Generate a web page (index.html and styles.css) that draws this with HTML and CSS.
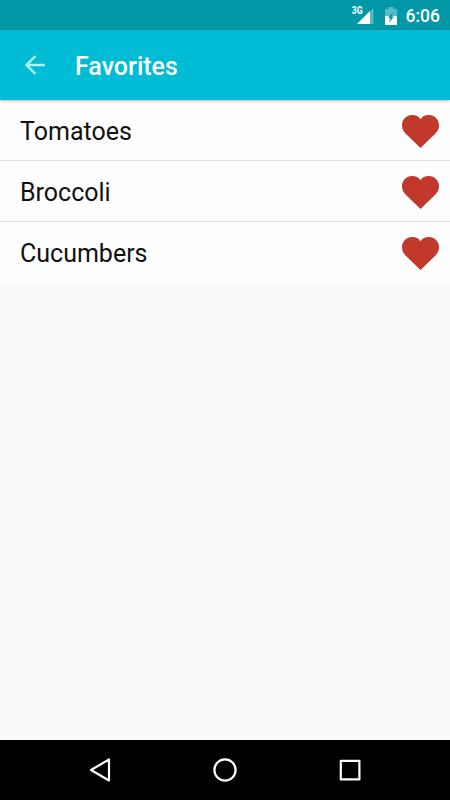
FILE: index.html
```html
<!DOCTYPE html>
<html lang="en">
<head>
<meta charset="utf-8">
<title>Favorites</title>
<link rel="stylesheet" href="styles.css">
</head>
<body>
<div class="screen">
  <div class="status">
    <span class="network">3G</span>
    <svg class="signal" width="18" height="16" viewBox="0 0 18 16"><path d="M1 16 17.5 0V16Z" fill="#fff" opacity=".32"/><path d="M1 16 14 3V16Z" fill="#fff"/></svg>
    <svg class="battery" width="12" height="18" viewBox="0 0 12 18"><path d="M0 2H3.5V0H8.5V2H12V9H0Z" fill="#fff" opacity=".35"/><path d="M0 9H12V18H0Z" fill="#fff"/><path d="M8 5 3 11H5.2L4 15.5 9 9.5H6.8Z" fill="#0097a7"/></svg>
    <time class="clock">6:06</time>
  </div>
  <header class="toolbar">
    <svg class="back" width="20" height="20" viewBox="0 0 20 20"><path d="M20 10H2M10.5 1 1.5 10 10.5 19" fill="none" stroke="#b2f2f5" stroke-width="2.3"/></svg>
    <h1 class="title">Favorites</h1>
  </header>
  <main class="content">
    <ul class="list">
      <li class="row"><span>Tomatoes</span><svg class="heart" viewBox="0 0 37 33"><path d="M18.5 33 4 19C1 16 0 13.5 0 10 0 4.5 4.5 0 10 0 14 0 17 1.5 18.5 4.2 20 1.5 23 0 27 0 32.500 0 37 4.500 37 10 37 13.500 36 16 33 19Z"/></svg></li>
      <li class="row"><span>Broccoli</span><svg class="heart" viewBox="0 0 37 33"><path d="M18.5 33 4 19C1 16 0 13.5 0 10 0 4.5 4.5 0 10 0 14 0 17 1.5 18.5 4.2 20 1.5 23 0 27 0 32.500 0 37 4.500 37 10 37 13.500 36 16 33 19Z"/></svg></li>
      <li class="row"><span>Cucumbers</span><svg class="heart" viewBox="0 0 37 33"><path d="M18.5 33 4 19C1 16 0 13.5 0 10 0 4.5 4.5 0 10 0 14 0 17 1.5 18.5 4.2 20 1.5 23 0 27 0 32.500 0 37 4.500 37 10 37 13.500 36 16 33 19Z"/></svg></li>
    </ul>
  </main>
  <nav class="navbar">
    <svg width="26" height="26" viewBox="0 0 26 26"><path d="M22 2.5V23.5L4 13Z"/></svg>
    <svg width="26" height="26" viewBox="0 0 26 26"><circle cx="13" cy="13" r="10.6"/></svg>
    <svg width="26" height="26" viewBox="0 0 26 26"><rect x="3.8" y="3.8" width="18.6" height="18.6"/></svg>
  </nav>
</div>
</body>
</html>
```

FILE: styles.css
```css
* { box-sizing: border-box; }
body { margin: 0; font-family: Roboto, sans-serif; }
.screen { width: 450px; height: 800px; display: flex; flex-direction: column; background: #fbf9fc; overflow: hidden; }
.status { height: 30px; flex: none; display: flex; align-items: flex-start; justify-content: flex-end; padding-right: 10px; background: #0097a7; color: #fff; }
.network { font-size: 10px; line-height: 12px; font-weight: 700; margin: 5px -7px 0 0; transform: scaleX(.86); transform-origin: right; }
.signal { margin: 8px 11px 0 0; }
.battery { margin: 7px 9px 0 0; }
.clock { font-size: 17.5px; line-height: 20px; font-weight: 500; margin-top: 6px; }
.toolbar { height: 70px; flex: none; display: flex; align-items: center; padding-left: 25px; background: #00bcd4; box-shadow: 0 1px 3px rgba(0, 0, 0, .28); z-index: 1; }
.title { margin: 4px 0 0 30px; color: #fff; font-size: 25px; line-height: 30px; font-weight: 500; }
.content { flex: 1; }
.list { margin: 0; padding: 0 0 1px; list-style: none; background: #fefefe; }
.row { height: 61px; display: flex; align-items: center; justify-content: space-between; padding: 2px 11px 0 20px; border-bottom: 1px solid #dedfe2; color: #111; font-size: 25px; line-height: 30px; }
.row span { margin-top: 2px; }
.row:last-child { border-bottom-color: transparent; }
.heart { width: 37px; height: 33px; margin-top: 1px; fill: #c0392b; }
.navbar { height: 60px; flex: none; display: flex; align-items: center; justify-content: space-between; padding: 0 87px; background: #000; }
.navbar svg { fill: none; stroke: #fff; stroke-width: 2.2; stroke-linejoin: round; }
```
